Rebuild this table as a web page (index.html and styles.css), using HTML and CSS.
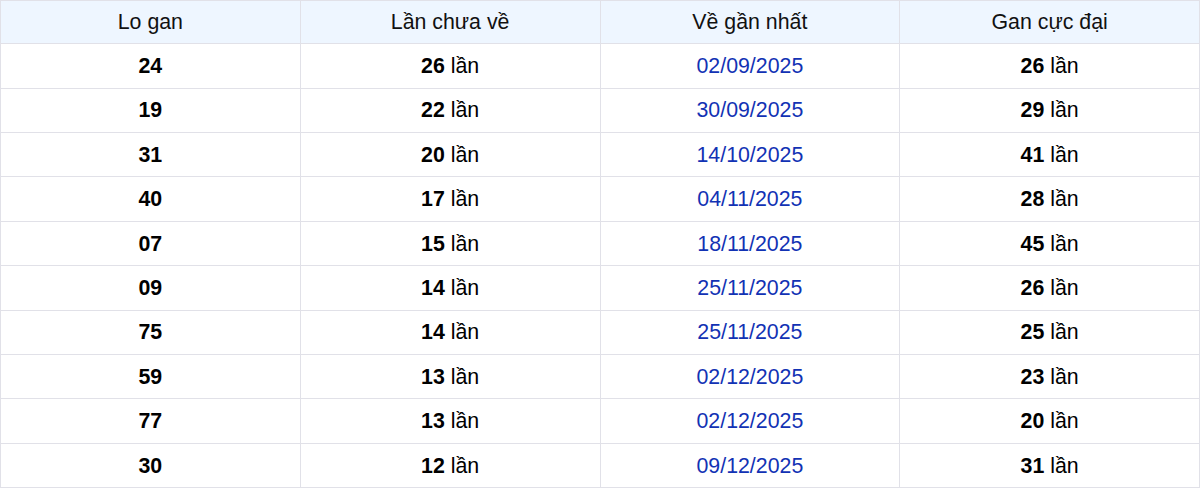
FILE: index.html
```html
<!DOCTYPE html>
<html lang="vi">
<head>
<meta charset="utf-8">
<link rel="stylesheet" href="styles.css">
</head>
<body>
<table class="gan-table">
  <thead>
    <tr><th>Lo gan</th><th>Lần chưa về</th><th>Về gần nhất</th><th>Gan cực đại</th></tr>
  </thead>
  <tbody>
    <tr><td><b>24</b></td><td><b>26</b> lần</td><td class="date">02/09/2025</td><td><b>26</b> lần</td></tr>
    <tr><td><b>19</b></td><td><b>22</b> lần</td><td class="date">30/09/2025</td><td><b>29</b> lần</td></tr>
    <tr><td><b>31</b></td><td><b>20</b> lần</td><td class="date">14/10/2025</td><td><b>41</b> lần</td></tr>
    <tr><td><b>40</b></td><td><b>17</b> lần</td><td class="date">04/11/2025</td><td><b>28</b> lần</td></tr>
    <tr><td><b>07</b></td><td><b>15</b> lần</td><td class="date">18/11/2025</td><td><b>45</b> lần</td></tr>
    <tr><td><b>09</b></td><td><b>14</b> lần</td><td class="date">25/11/2025</td><td><b>26</b> lần</td></tr>
    <tr><td><b>75</b></td><td><b>14</b> lần</td><td class="date">25/11/2025</td><td><b>25</b> lần</td></tr>
    <tr><td><b>59</b></td><td><b>13</b> lần</td><td class="date">02/12/2025</td><td><b>23</b> lần</td></tr>
    <tr><td><b>77</b></td><td><b>13</b> lần</td><td class="date">02/12/2025</td><td><b>20</b> lần</td></tr>
    <tr><td><b>30</b></td><td><b>12</b> lần</td><td class="date">09/12/2025</td><td><b>31</b> lần</td></tr>
  </tbody>
</table>
</body>
</html>
```
FILE: styles.css
```css
html, body {
  margin: 0;
  padding: 0;
  background: #ffffff;
}
body {
  font-family: "Liberation Sans", Arial, sans-serif;
  font-size: 21.33px;
  color: #000000;
}
.gan-table {
  width: 1200px;
  border-collapse: collapse;
  table-layout: fixed;
}
.gan-table th,
.gan-table td {
  border: 1px solid #e1e1e8;
  text-align: center;
  padding: 0;
  height: 43.4px;
  line-height: 24px;
  font-weight: normal;
}
.gan-table thead th {
  background: #eef6ff;
  height: 42.3px;
  color: #111111;
}
.gan-table b {
  font-weight: bold;
}
.gan-table td.date {
  color: #1232b4;
}
```
